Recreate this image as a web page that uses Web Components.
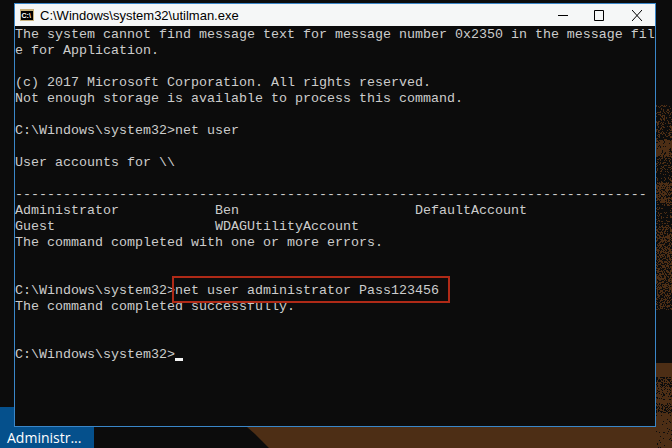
<!DOCTYPE html>
<html lang="en">
<head>
<meta charset="utf-8">
<title>utilman.exe</title>
<style>
    html, body { margin: 0; padding: 0; background: #0c0c0c; }
</style>
</head>
<body>
<x-desktop>
    <x-wallpaper slot="wallpaper"></x-wallpaper>
    <x-console-window slot="window" title="C:\Windows\system32\utilman.exe">
        <x-console>The system cannot find message text for message number 0x2350 in the message fil
e for Application.

(c) 2017 Microsoft Corporation. All rights reserved.
Not enough storage is available to process this command.

C:\Windows\system32&gt;net user

User accounts for \\

-------------------------------------------------------------------------------
Administrator            Ben                      DefaultAccount
Guest                    WDAGUtilityAccount
The command completed with one or more errors.


C:\Windows\system32&gt;<x-highlight>net user administrator Pass123456</x-highlight>
The command completed successfully.


C:\Windows\system32&gt;<x-cursor></x-cursor></x-console>
    </x-console-window>
    <x-task-button slot="taskbar">Administr...</x-task-button>
</x-desktop>

<script>
// Desktop: wallpaper behind, the window on its free canvas, task button at the bottom
class XDesktop extends HTMLElement {
    constructor() {
        super();
        this.attachShadow({ mode: 'open' }).innerHTML = `
        <style>
            :host {
                display: flex;
                flex-direction: column;
                justify-content: flex-end;
                position: relative;
                width: 672px;
                height: 448px;
                overflow: hidden;
                background: #0c0c0c;
            }
        </style>
        <slot name="wallpaper"></slot>
        <slot name="taskbar"></slot>
        <slot name="window"></slot>
        `;
    }
}
customElements.define('x-desktop', XDesktop);

// Black and brown wallpaper, with the dithered dots seen right of the window
class XWallpaper extends HTMLElement {
    constructor() {
        super();
        this.attachShadow({ mode: 'open' });
    }

    connectedCallback() {
        this.shadowRoot.innerHTML = `
        <style>
            :host { display: block; position: absolute; inset: 0; }
            svg { display: block; }
        </style>
        <svg width="672" height="448" viewBox="0 0 672 448">
            <path d="M247 427H672V448H269L262 441L255 434Z" fill="#4d2e15"/>
            <path d="${this.dots(true)}" fill="#4d2e15"/>
            <path d="${this.dots(false)}" fill="#0c0c0c"/>
        </svg>
        `;
    }

    // Small seeded generator so the picture is the same on every load
    dots(brown) {
        let seed = brown ? 1234 : 4321;
        const random = () => {
            seed = (seed * 16807) % 2147483647;
            return seed / 2147483647;
        };
        const bands = brown
            ? [[105, 127, 0.3], [127, 140, 0.35], [140, 157, 0.85], [157, 183, 0.25],
               [183, 203, 0.7], [203, 226, 0.2], [226, 250, 0.55], [250, 290, 0.6],
               [290, 310, 0.4], [363, 448, 1]]
            : [[377, 387, 0.45], [387, 400, 0.2], [403, 413, 0.4], [413, 427, 0.05], [427, 448, 0.05]];
        let d = '';
        bands.forEach(([top, bottom, density]) => {
            for (let y = top; y < bottom; y++) {
                for (let x = 656; x < 672; x++) {
                    if (random() < density) d += `M${x} ${y}h1v1h-1z`;
                }
            }
        });
        return d;
    }
}
customElements.define('x-wallpaper', XWallpaper);

// Console window frame with title bar
class XConsoleWindow extends HTMLElement {
    constructor() {
        super();
        this.attachShadow({ mode: 'open' });
    }

    connectedCallback() {
        this.shadowRoot.innerHTML = `
        <style>
            :host {
                display: flex;
                flex-direction: column;
                position: absolute;
                left: 14px;
                top: 3px;
                width: 640px;
                height: 422px;
                border: 1px solid #3a87c9;
                background: #0c0c0c;
            }
            .bar {
                display: flex;
                align-items: center;
                flex: none;
                height: 22px;
                padding-left: 5px;
                background: #f5f7f7;
                color: #000;
                font: 13px "Liberation Sans", Arial, sans-serif;
            }
            .icon { flex: none; margin-right: 6px; }
            .name { flex: 1; white-space: nowrap; }
            .controls { display: flex; align-items: center; flex: none; }
            .controls svg { display: block; }
            .min { margin-right: 26px; }
            .max { margin-right: 28px; }
            .close { margin-right: 13px; }
        </style>
        <div class="bar">
            <svg class="icon" width="14" height="12" viewBox="0 0 14 12">
                <rect width="14" height="12" fill="#c9b27c"/>
                <rect x="1" y="2" width="12" height="9" fill="#000"/>
                <text x="1.5" y="9" font-family="Liberation Sans, sans-serif" font-size="7" font-weight="700" fill="#fff">C:\\</text>
            </svg>
            <span class="name">${this.getAttribute('title')}</span>
            <div class="controls">
                <svg class="min" width="10" height="11" viewBox="0 0 10 11"><path d="M0 5.5H10" stroke="#000"/></svg>
                <svg class="max" width="10" height="11" viewBox="0 0 10 11"><path d="M.5 .5H9.5V10.5H.5Z" fill="none" stroke="#000"/></svg>
                <svg class="close" width="10" height="11" viewBox="0 0 10 11"><path d="M0 0L10 11M10 0L0 11" stroke="#000" fill="none"/></svg>
            </div>
        </div>
        <slot></slot>
        `;
    }
}
customElements.define('x-console-window', XConsoleWindow);

// Console body, 80 columns of 8px and rows of 16px
class XConsole extends HTMLElement {
    constructor() {
        super();
        // Template indentation must not paint: only .text has white-space: pre
        this.attachShadow({ mode: 'open' }).innerHTML = `
        <style>
            :host {
                display: block;
                flex: 1;
                padding-top: 1px;
                color: #cccccc;
                font: 13.333px/16px "Liberation Mono", "Courier New", monospace;
            }
            .text { white-space: pre; }
        </style>
        <div class="text"><slot></slot></div>
        `;
    }
}
customElements.define('x-console', XConsole);

// Red box drawn over a piece of console text
class XHighlight extends HTMLElement {
    constructor() {
        super();
        this.attachShadow({ mode: 'open' }).innerHTML = `
        <style>
            :host { display: inline-block; position: relative; height: 16px; white-space: nowrap; }
            :host::after {
                content: "";
                position: absolute;
                left: -3px;
                right: -11px;
                top: -7px;
                bottom: -4px;
                border: 2px solid #b02a17;
            }
        </style>
        <slot></slot>
        `;
    }
}
customElements.define('x-highlight', XHighlight);

// Blinking cursor block, caught in its visible state
class XCursor extends HTMLElement {
    constructor() {
        super();
        this.attachShadow({ mode: 'open' }).innerHTML = `
        <style>
            :host {
                display: inline-block;
                width: 8px;
                height: 3px;
                vertical-align: -3px;
                white-space: normal;
                background: #f2f2f2;
            }
        </style>
        `;
    }
}
customElements.define('x-cursor', XCursor);

// Taskbar button; its top part is hidden behind the window
class XTaskButton extends HTMLElement {
    constructor() {
        super();
        this.attachShadow({ mode: 'open' }).innerHTML = `
        <style>
            :host {
                display: flex;
                align-items: flex-end;
                position: relative;
                box-sizing: border-box;
                width: 94px;
                height: 41px;
                padding: 0 0 1px 7px;
                background: #05508c;
                color: #fff;
                font: 14px/19px "Open Sans", "Noto Sans", sans-serif;
                white-space: nowrap;
            }
        </style>
        <slot></slot>
        `;
    }
}
customElements.define('x-task-button', XTaskButton);
</script>
</body>
</html>
